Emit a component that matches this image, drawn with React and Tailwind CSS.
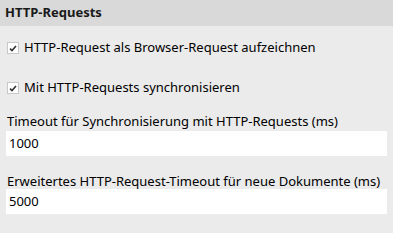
import React from "react";

function Check() {
  return (
    <span className="flex h-[12px] w-[12px] shrink-0 items-center justify-center border border-[#c8c8c8] bg-white">
      <svg width="8" height="7" viewBox="0 0 8 7">
        <path d="M1 3.6 L3 5.6 L7 1" fill="none" stroke="#333" strokeWidth="1.6" />
      </svg>
    </span>
  );
}

export default function App() {
  const font = { fontFamily: '"Noto Sans", "Open Sans", sans-serif' };
  return (
    <div className="h-[233px] w-[393px] bg-[#ebebeb] text-[13px] text-black" style={font}>
      <div className="flex h-[26px] items-center bg-[#d9d9d9] px-[5px] font-bold text-[#1a1a1a]">
        HTTP-Requests
      </div>
      <div className="flex flex-col px-[6px]">
        <label className="mt-[15px] flex h-[14px] items-center gap-[5px] pl-[1px]">
          <Check />
          <span>HTTP-Request als Browser-Request aufzeichnen</span>
        </label>
        <label className="mt-[26px] flex h-[14px] items-center gap-[5px] pl-[1px]">
          <Check />
          <span>Mit HTTP-Requests synchronisieren</span>
        </label>
        <div className="mt-[18px] h-[16px] leading-[16px] pl-[1px]">
          Timeout für Synchronisierung mit HTTP-Requests (ms)
        </div>
        <div className="mt-[2px] flex h-[25px] w-[381px] items-center bg-white px-[3px]">1000</div>
        <div className="mt-[17px] h-[16px] leading-[16px] pl-[1px]">
          Erweitertes HTTP-Request-Timeout für neue Dokumente (ms)
        </div>
        <div className="flex h-[25px] w-[381px] items-center bg-white px-[3px]">5000</div>
      </div>
    </div>
  );
}
